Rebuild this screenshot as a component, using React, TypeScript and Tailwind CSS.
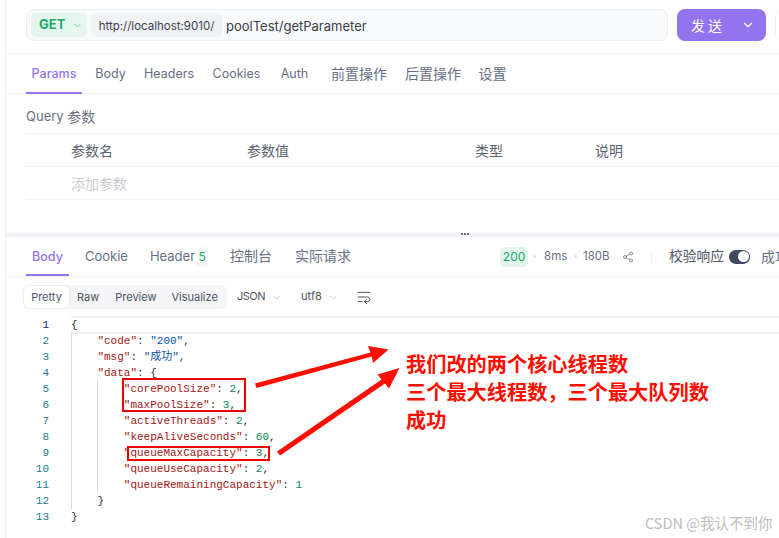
import { ChevronDown, Share2, WrapText } from 'lucide-react';

type Tok = { t: string; k: 'p' | 'key' | 'str' | 'num' };

const p = (t: string): Tok => ({ t, k: 'p' });
const key = (t: string): Tok => ({ t, k: 'key' });
const str = (t: string): Tok => ({ t, k: 'str' });
const num = (t: string): Tok => ({ t, k: 'num' });

const tokColor = {
  p: 'text-[#333333]',
  key: 'text-[#a31515]',
  str: 'text-[#0451a5]',
  num: 'text-[#098658]',
};

const code: Tok[][] = [
  [p('{')],
  [p('    '), key('"code"'), p(': '), str('"200"'), p(',')],
  [p('    '), key('"msg"'), p(': '), str('"成功"'), p(',')],
  [p('    '), key('"data"'), p(': {')],
  [p('        '), key('"corePoolSize"'), p(': '), num('2'), p(',')],
  [p('        '), key('"maxPoolSize"'), p(': '), num('3'), p(',')],
  [p('        '), key('"activeThreads"'), p(': '), num('2'), p(',')],
  [p('        '), key('"keepAliveSeconds"'), p(': '), num('60'), p(',')],
  [p('        '), key('"queueMaxCapacity"'), p(': '), num('3'), p(',')],
  [p('        '), key('"queueUseCapacity"'), p(': '), num('2'), p(',')],
  [p('        '), key('"queueRemainingCapacity"'), p(': '), num('1')],
  [p('    }')],
  [p('}')],
];

const reqTabs = [
  { label: 'Params', cls: 'w-[56px] pt-[3px] text-[12.5px] font-medium text-[#9373ee] border-[#9373ee]' },
  { label: 'Body', cls: 'w-[43px] ml-[7px] pt-[3px] text-[12.5px] border-transparent' },
  { label: 'Headers', cls: 'w-[62px] ml-[6px] pt-[3px] text-[12.5px] border-transparent' },
  { label: 'Cookies', cls: 'w-[61px] ml-[6px] pt-[3px] text-[12.5px] border-transparent' },
  { label: 'Auth', cls: 'w-[41px] ml-[7px] pt-[3px] text-[12.5px] border-transparent' },
  { label: '前置操作', cls: 'w-[68px] ml-[10px] pt-[1px] text-[14px] border-transparent' },
  { label: '后置操作', cls: 'w-[68px] ml-[6px] pt-[1px] text-[14px] border-transparent' },
  { label: '设置', cls: 'w-[39px] ml-[6px] pt-[1px] text-[14px] border-transparent' },
];

const columns = [
  { label: '参数名', cls: 'w-[176px]' },
  { label: '参数值', cls: 'w-[228px]' },
  { label: '类型', cls: 'w-[120px]' },
  { label: '说明', cls: 'w-[100px]' },
];

function Dot() {
  return <span className="block w-[3px] h-[3px] rounded-full bg-[#dfe1e6]" />;
}

export default function App() {
  return (
    <div className="relative w-[779px] h-[538px] overflow-hidden bg-white text-[13px] text-[#667085] font-['Inter','Noto_Sans_CJK_SC',sans-serif]">
      <div className="ml-[5px] h-full border-l border-[#f0f0f3] flex flex-col">
        {/* url bar */}
        <div className="h-[54px] shrink-0 border-b border-[#f0f1f4] pt-[9px] pl-[20px] flex gap-[9px]">
          <div className="w-[642px] h-[32px] shrink-0 rounded-[8px] border border-[#eceef2] bg-[#f9fafb] flex items-center pl-[4px]">
            <div className="w-[56px] h-[24px] rounded-[5px] bg-[#e5f6ee] flex items-center pl-[8px] gap-[7px] text-[#1aaa6c] font-bold text-[13px]">
              GET
              <ChevronDown size={11} strokeWidth={2} className="text-[#6fcba3]" />
            </div>
            <div className="ml-[4px] w-[131px] h-[24px] pt-[3px] rounded-[5px] bg-[#f1f2f6] flex items-center justify-center text-[11.5px] text-[#3c3f52] whitespace-nowrap">
              http://localhost:9010/
            </div>
            <span className="ml-[4px] pt-[3px] text-[13px] text-[#383d4a]">poolTest/getParameter</span>
          </div>
          <div className="w-[89px] h-[32px] shrink-0 rounded-[8px] bg-[#9373ee] flex items-center justify-between pl-[14px] pr-[11px] text-white text-[14px] tracking-[3px]">
            <span>发送</span>
            <ChevronDown size={14} strokeWidth={2} />
          </div>
          <div className="w-[40px] h-[32px] shrink-0 rounded-[8px] border border-[#eceef2]" />
        </div>

        {/* request tabs */}
        <div className="h-[40px] shrink-0 border-b border-[#f0f1f4] pl-[20px] flex">
          {reqTabs.map((tab) => (
            <div key={tab.label} className={`h-[40px] border-b-2 flex items-center justify-center whitespace-nowrap ${tab.cls}`}>
              {tab.label}
            </div>
          ))}
        </div>

        {/* query params */}
        <div className="h-[139px] shrink-0 pl-[20px]">
          <div className="h-[40px] pt-[6px] border-b border-[#f2f3f5] flex items-center text-[13px] text-[#6b7280]">
            Query&nbsp;<span className="text-[14px]">参数</span>
          </div>
          <div className="h-[33px] pt-[1px] border-b border-[#f2f3f5] pl-[45px] flex items-center text-[14px] text-[#5b6270]">
            {columns.map((col) => (
              <div key={col.label} className={col.cls}>{col.label}</div>
            ))}
          </div>
          <div className="h-[33px] border-b border-[#f2f3f5] pl-[45px] flex items-center text-[14px] text-[#c9ccd3]">添加参数</div>
        </div>

        {/* splitter */}
        <div className="h-[4px] shrink-0 bg-[#f1f2f6] flex items-start gap-[1px] pl-[455px]">
          <span className="w-[2px] h-[2px] bg-[#6b7080]" />
          <span className="w-[2px] h-[2px] bg-[#6b7080]" />
          <span className="w-[2px] h-[2px] bg-[#6b7080]" />
        </div>

        {/* response tabs */}
        <div className="h-[40px] shrink-0 border-b border-[#f0f1f4] pl-[20px] flex items-stretch whitespace-nowrap">
          <div className="w-[43px] shrink-0 pt-[3px] border-b-2 border-[#9373ee] text-[#9373ee] font-medium flex items-center justify-center text-[12.5px]">Body</div>
          <div className="ml-[16px] shrink-0 flex items-center">Cookie</div>
          <div className="ml-[22px] shrink-0 flex items-center">
            Header
            <span className="ml-[1px] w-[12px] h-[20px] rounded-[4px] bg-[#f5f6f8] text-[#1aaa6c] flex items-center justify-center text-[12px]">5</span>
          </div>
          <div className="ml-[22px] shrink-0 pb-[2px] flex items-center text-[14px]">控制台</div>
          <div className="ml-[23px] shrink-0 pb-[2px] flex items-center text-[14px]">实际请求</div>
          <div className="ml-[149px] shrink-0 flex items-center text-[11.5px]">
            <span className="w-[28px] h-[20px] rounded-[5px] bg-[#e3f6ed] text-[#1aaa6c] flex items-center justify-center text-[12px]">200</span>
            <span className="ml-[5px]"><Dot /></span>
            <span className="ml-[8px] w-[22px]">8ms</span>
            <span className="ml-[8px]"><Dot /></span>
            <span className="ml-[6px] w-[26px]">180B</span>
            <Share2 size={12} strokeWidth={1.5} className="ml-[13px]" />
            <span className="ml-[17px] w-px h-[12px] bg-[#eff0f3]" />
            <span className="ml-[17px] text-[13.75px] text-[#4b5563]">校验响应</span>
            <span className="ml-[5px] w-[21px] h-[14px] rounded-full bg-[#3f4a60] flex items-center justify-end pr-[1px]">
              <span className="w-[11px] h-[11px] rounded-full bg-white" />
            </span>
            <span className="ml-[11px] text-[14px]">成功</span>
          </div>
        </div>

        {/* response toolbar */}
        <div className="h-[40px] shrink-0 pl-[17px] flex items-center text-[11px] text-[#4b5563] whitespace-nowrap">
          <div className="w-[204px] h-[24px] rounded-[6px] bg-[#f5f5f7] flex items-center pl-[1px]">
            <div className="w-[45px] h-[22px] rounded-[5px] bg-white shadow-[0_0_2px_rgba(0,0,0,0.12)] flex items-center justify-center">Pretty</div>
            <span className="ml-[8px]">Raw</span>
            <span className="ml-[16px]">Preview</span>
            <span className="ml-[15px]">Visualize</span>
          </div>
          <span className="ml-[10px] mb-[1px] tracking-[-0.5px]">JSON</span>
          <ChevronDown size={11} className="ml-[6px] text-[#c4c7ce]" />
          <span className="ml-[19px] mb-[1px]">utf8</span>
          <ChevronDown size={11} className="ml-[6px] text-[#c4c7ce]" />
          <WrapText size={16} strokeWidth={1.5} className="ml-[17px]" />
        </div>

        {/* code */}
        <div className="relative flex-1 font-['Liberation_Mono','Noto_Sans_CJK_SC',monospace] text-[11px] leading-[16px] whitespace-pre">
          <div>
            {code.map((line, i) => (
              <div key={i} className="flex h-[16px]">
                <span className={`w-[43px] shrink-0 text-right ${i === 0 ? 'text-[#0b216f]' : 'text-[#237893]'}`}>{i + 1}</span>
                <span className="ml-[22px] shrink-0">
                  {line.map((tok, j) => (
                    <span key={j} className={tokColor[tok.k]}>{tok.t}</span>
                  ))}
                </span>
              </div>
            ))}
          </div>
          {/* active line outline and indent guides */}
          <div className="absolute left-[65px] right-0 top-[-1px] h-[18px] border-y-2 border-[#eeeeee]" />
          <div className="absolute left-[65px] top-[16px] h-[176px] w-px bg-[#d9d9d9]" />
          <div className="absolute left-[91px] top-[63px] h-[112px] w-px bg-[#d9d9d9]" />
        </div>
      </div>

      {/* annotations drawn over the screenshot */}
      <div className="absolute left-[122px] top-[378px] w-[124px] h-[34px] border-2 border-[#ee0000]" />
      <div className="absolute left-[127px] top-[446px] w-[143px] h-[15px] border-2 border-[#ee0000]" />
      <svg className="absolute left-0 top-0" width="779" height="538" fill="#ff0d00">
        <path d="M255 383.6 L370.5 352.6 L368 346 L388.5 349.5 L373 363 L371.8 356.5 L256.5 388 Z" />
        <path d="M277 451.5 L381.5 379.5 L377.5 374.5 L399.5 368 L389 388.5 L385 383.5 L280 455.5 Z" />
      </svg>
      <div className="absolute left-[406px] top-[350px] text-[20.2px] leading-[28px] font-bold text-[#ff0d00] whitespace-nowrap font-['Noto_Sans_CJK_SC',sans-serif]">
        <div>我们改的两个核心线程数</div>
        <div>三个最大线程数，三个最大队列数</div>
        <div>成功</div>
      </div>
      <div className="absolute left-[645px] top-[513px] text-[14.5px] leading-[20px] text-[#bdbdbd] whitespace-nowrap font-['Noto_Sans_CJK_SC',sans-serif]">
        CSDN @我认不到你
      </div>
    </div>
  );
}
